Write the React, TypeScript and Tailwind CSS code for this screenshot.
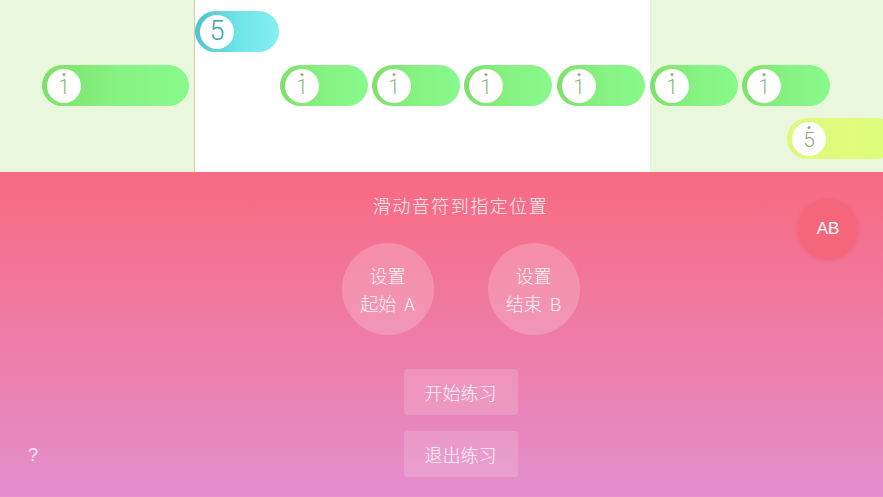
import type { ReactNode } from "react";

type Note = {
  left: number;
  top: number;
  width: number;
  digit: string;
  dot?: boolean;
  tone: "green" | "cyan" | "yellow";
};

const notes: Note[] = [
  { left: 195, top: 11, width: 84, digit: "5", tone: "cyan" },
  { left: 42, top: 65, width: 147, digit: "1", dot: true, tone: "green" },
  { left: 280, top: 65, width: 88, digit: "1", dot: true, tone: "green" },
  { left: 372, top: 65, width: 88, digit: "1", dot: true, tone: "green" },
  { left: 464, top: 65, width: 88, digit: "1", dot: true, tone: "green" },
  { left: 557, top: 65, width: 88, digit: "1", dot: true, tone: "green" },
  { left: 650, top: 65, width: 88, digit: "1", dot: true, tone: "green" },
  { left: 742, top: 65, width: 88, digit: "1", dot: true, tone: "green" },
  { left: 787, top: 118, width: 110, digit: "5", dot: true, tone: "yellow" },
];

const toneClass = {
  green: "bg-gradient-to-r from-[#7ee06a] via-[#86f282] to-[#88f98c]",
  cyan: "bg-gradient-to-r from-[#4cc3cc] via-[#6ee3e8] to-[#84f0f2]",
  yellow: "bg-gradient-to-r from-[#dcf77c] via-[#e0fc7c] to-[#dcfd7a]",
};

const digitClass = {
  green: "text-[#88b57c]",
  cyan: "text-[#3ea2ad]",
  yellow: "text-[#a0a478]",
};

function NotePill({ note }: { note: Note }) {
  return (
    <div
      className={`absolute flex h-[41px] items-center rounded-full ${toneClass[note.tone]}`}
      style={{ left: note.left, top: note.top, width: note.width }}
    >
      <div className="ml-[5px] flex h-[34px] w-[34px] items-center justify-center rounded-full bg-white">
        <span
          className={`relative font-['Roboto',sans-serif] font-light ${digitClass[note.tone]} ${
            note.tone === "cyan" ? "text-[27px] leading-none" : "mt-[3px] text-[21px] leading-none"
          }`}
        >
          {note.dot && (
            <span className="absolute left-1/2 top-[-4px] h-[3px] w-[3px] -translate-x-1/2 rounded-full bg-current" />
          )}
          {note.digit}
        </span>
      </div>
    </div>
  );
}

function RoundButton({ children }: { children: ReactNode }) {
  return (
    <button className="flex h-[92px] w-[92px] flex-col items-center justify-center rounded-full bg-white/20 text-[18px] font-light leading-[28px] text-white/90">
      {children}
    </button>
  );
}

function PracticeButton({ label }: { label: string }) {
  return (
    <button className="flex h-[46px] w-[114px] items-center justify-center rounded-[3px] bg-white/15 text-[18px] font-light text-white/90">
      {label}
    </button>
  );
}

export default function App() {
  return (
    <div className="flex h-[497px] w-[883px] flex-col overflow-hidden font-['Noto_Sans_CJK_SC','Noto_Sans',sans-serif]">
      {/* score strip */}
      <div className="relative flex h-[172px] shrink-0">
        <div className="w-[194px] bg-[#e9f7dd]" />
        <div className="w-px bg-[#d8cba8]" />
        <div className="flex-1 bg-white" />
        <div className="w-[233px] bg-[#e9f7dd]" />
        {notes.map((n, i) => (
          <NotePill key={i} note={n} />
        ))}
      </div>

      {/* controls */}
      <div className="relative flex flex-1 flex-col items-center bg-gradient-to-b from-[#f86a81] via-[#ee7ca6] to-[#e38fcd] pl-[38px] text-white">
        <p className="mt-[22px] h-[22px] text-[18px] font-light leading-[22px] tracking-[1.5px] text-white/90">
          滑动音符到指定位置
        </p>
        <div className="mt-[27px] flex gap-[54px]">
          <RoundButton>
            <span>设置</span>
            <span>起始&nbsp;&nbsp;A</span>
          </RoundButton>
          <RoundButton>
            <span>设置</span>
            <span>结束&nbsp;&nbsp;B</span>
          </RoundButton>
        </div>
        <div className="mt-[34px] flex flex-col gap-[16px]">
          <PracticeButton label="开始练习" />
          <PracticeButton label="退出练习" />
        </div>

        <button className="absolute left-[798px] top-[27px] flex h-[60px] w-[60px] items-center justify-center rounded-full bg-[#f6667b] font-['Liberation_Sans',sans-serif] text-[17px] text-white shadow-[0_1px_4px_rgba(200,60,80,0.25)]">
          AB
        </button>
        <span className="absolute left-[28px] top-[270px] font-['Liberation_Sans',sans-serif] text-[18px] text-white/80">?</span>
      </div>
    </div>
  );
}
